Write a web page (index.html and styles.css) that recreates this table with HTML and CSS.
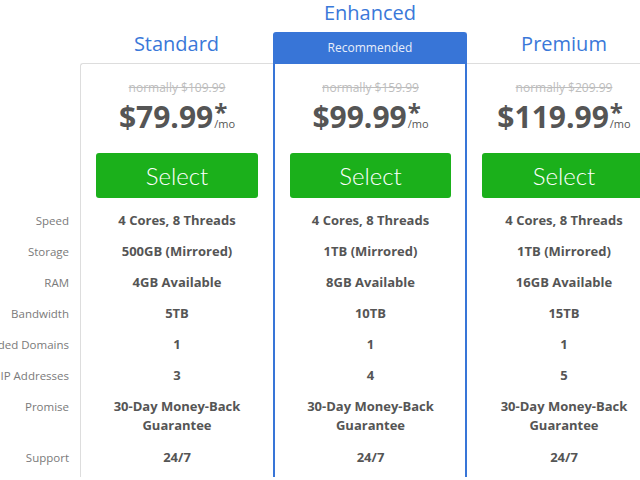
FILE: index.html
```html
<!DOCTYPE html>
<html lang="en">
<head>
<meta charset="utf-8">
<title>Plans</title>
<link rel="stylesheet" href="styles.css">
</head>
<body>
<div class="table">
  <div class="labels">
    <div class="label-spacer"></div>
    <div class="row"><span>Speed</span></div>
    <div class="row"><span>Storage</span></div>
    <div class="row"><span>RAM</span></div>
    <div class="row"><span>Bandwidth</span></div>
    <div class="row"><span>Included Domains</span></div>
    <div class="row"><span>Dedicated IP Addresses</span></div>
    <div class="row tall"><span>Promise</span></div>
    <div class="row"><span>Support</span></div>
  </div>

  <div class="plan plan-first">
    <div class="plan-title">Standard</div>
    <div class="card">
      <div class="old">normally $109.99</div>
      <div class="price">$79.99<span class="suffix"><span class="star">*</span><span class="mo">/mo</span></span></div>
      <button class="select">Select</button>
      <div class="row">4 Cores, 8 Threads</div>
      <div class="row">500GB (Mirrored)</div>
      <div class="row">4GB Available</div>
      <div class="row">5TB</div>
      <div class="row">1</div>
      <div class="row">3</div>
      <div class="row tall">30-Day Money-Back Guarantee</div>
      <div class="row">24/7</div>
    </div>
  </div>

  <div class="plan plan-featured">
    <div class="plan-title">Enhanced</div>
    <div class="featured-box">
      <div class="badge">Recommended</div>
      <div class="card">
        <div class="old">normally $159.99</div>
        <div class="price">$99.99<span class="suffix"><span class="star">*</span><span class="mo">/mo</span></span></div>
        <button class="select">Select</button>
        <div class="row">4 Cores, 8 Threads</div>
        <div class="row">1TB (Mirrored)</div>
        <div class="row">8GB Available</div>
        <div class="row">10TB</div>
        <div class="row">1</div>
        <div class="row">4</div>
        <div class="row tall">30-Day Money-Back Guarantee</div>
        <div class="row">24/7</div>
      </div>
    </div>
  </div>

  <div class="plan plan-last">
    <div class="plan-title">Premium</div>
    <div class="card">
      <div class="old">normally $209.99</div>
      <div class="price">$119.99<span class="suffix"><span class="star">*</span><span class="mo">/mo</span></span></div>
      <button class="select">Select</button>
      <div class="row">4 Cores, 8 Threads</div>
      <div class="row">1TB (Mirrored)</div>
      <div class="row">16GB Available</div>
      <div class="row">15TB</div>
      <div class="row">1</div>
      <div class="row">5</div>
      <div class="row tall">30-Day Money-Back Guarantee</div>
      <div class="row">24/7</div>
    </div>
  </div>
</div>
</body>
</html>
```

FILE: styles.css
```css
* { box-sizing: border-box; }

html, body {
  margin: 0;
  padding: 0;
  background: #ffffff;
  overflow: hidden;
}

body {
  font-family: "Open Sans", "Liberation Sans", sans-serif;
  color: #555555;
}

.table {
  display: flex;
  align-items: stretch;
  height: 477px;
}

.labels {
  flex: 0 0 80px;
  width: 80px;
  min-width: 0;
  display: flex;
  flex-direction: column;
  font-size: 11.5px;
  color: #7a7a7a;
}

.label-spacer {
  height: 205px;
  flex: 0 0 auto;
}

.labels .row {
  display: flex;
  justify-content: flex-end;
  padding-right: 11px;
  white-space: nowrap;
}

.labels .row span {
  flex: 0 0 auto;
}

.row {
  padding: 6px 0;
  line-height: 19px;
  height: 31px;
}

.row.tall {
  height: 51px;
}

.plan {
  display: flex;
  flex-direction: column;
  flex: 0 0 194px;
  width: 194px;
  min-width: 0;
  text-align: center;
}

.plan-first { flex-basis: 193px; width: 193px; padding-top: 31px; }
.plan-last { padding-top: 31px; }

.plan-title {
  font-size: 20px;
  line-height: 26px;
  margin-bottom: 6px;
  color: #3a78d9;
}

.card {
  flex: 1;
  padding: 15px 15px 4px;
  background: #ffffff;
}

.plan-first .card {
  border-top: 1px solid #dddddd;
  border-left: 1px solid #dddddd;
  border-top-left-radius: 3px;
}

.plan-last .card {
  border-top: 1px solid #dddddd;
}

.featured-box {
  flex: 1;
  display: flex;
  flex-direction: column;
  border: 2px solid #3875d7;
  border-bottom: none;
  border-radius: 3px 3px 0 0;
}

.featured-box .card {
  padding: 15px 14px 4px 15px;
}

.badge {
  height: 30px;
  line-height: 28px;
  background: #3875d7;
  color: #e8eefa;
  font-size: 12px;
}

.old {
  font-size: 12px;
  line-height: 18px;
  color: #bdbdbd;
  text-decoration: line-through;
}

.price {
  font-size: 30px;
  font-weight: 700;
  line-height: 40px;
  color: #555555;
}

.suffix {
  display: inline-block;
  text-align: left;
  vertical-align: baseline;
  margin-left: 1px;
}

.star {
  display: block;
  font-size: 24px;
  line-height: 14px;
  height: 12px;
}

.mo {
  display: block;
  font-size: 11px;
  font-weight: 400;
  line-height: 13px;
}

.select {
  display: block;
  width: 100%;
  height: 45px;
  margin: 16px 0 7px;
  border: none;
  border-radius: 3px;
  background: #1bb01b;
  color: #ffffff;
  font-family: Lato, "Open Sans", sans-serif;
  font-weight: 300;
  font-size: 24px;
  padding: 0;
  cursor: pointer;
}

.card .row {
  font-size: 13px;
  font-weight: 700;
  color: #555555;
}
```
